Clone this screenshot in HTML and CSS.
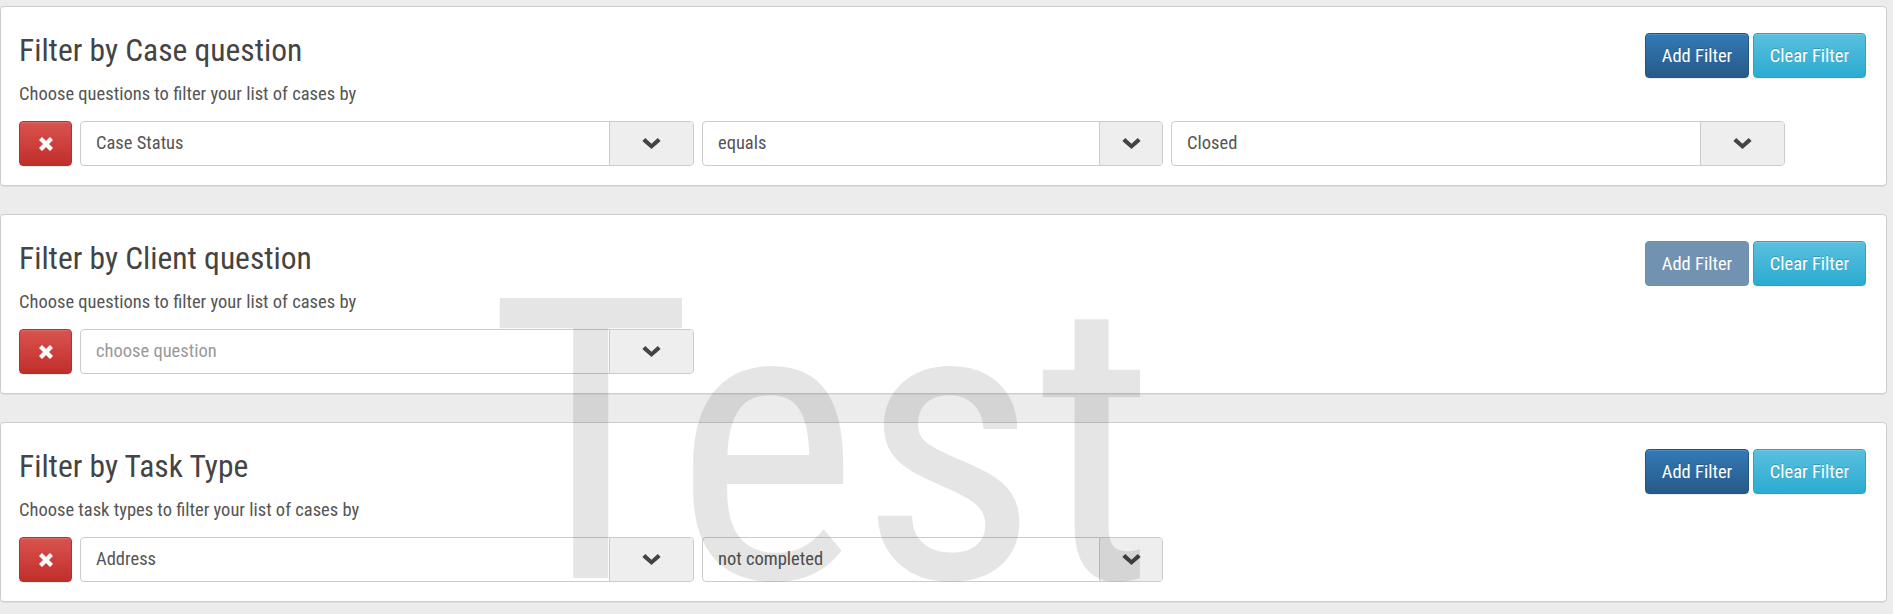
FILE: index.html
```html
<!DOCTYPE html>
<html lang="en">
<head>
<meta charset="utf-8">
<title>Filters</title>
<link rel="stylesheet" href="styles.css">
</head>
<body>
<div class="page">
  <section class="panel">
    <div class="panel-head">
      <div class="intro">
        <h3 class="title">Filter by Case question</h3>
        <p class="subtitle">Choose questions to filter your list of cases by</p>
      </div>
      <div class="actions">
        <button class="btn btn-primary">Add Filter</button>
        <button class="btn btn-info">Clear Filter</button>
      </div>
    </div>
    <div class="filter-row">
      <button class="btn-remove" aria-label="Remove"><svg class="icon-x" viewBox="0 0 14 14"><polygon points="3,0 7,4 11,0 14,3 10,7 14,11 11,14 7,10 3,14 0,11 4,7 0,3"/></svg></button>
      <div class="select wide"><span class="value">Case Status</span><span class="caret"><svg class="chev" viewBox="0 0 20 12"><polygon points="0,3.2 3.2,0 10,6.4 16.8,0 20,3.2 10,12"/></svg></span></div>
      <div class="select mid"><span class="value">equals</span><span class="caret"><svg class="chev" viewBox="0 0 20 12"><polygon points="0,3.2 3.2,0 10,6.4 16.8,0 20,3.2 10,12"/></svg></span></div>
      <div class="select wide"><span class="value">Closed</span><span class="caret"><svg class="chev" viewBox="0 0 20 12"><polygon points="0,3.2 3.2,0 10,6.4 16.8,0 20,3.2 10,12"/></svg></span></div>
    </div>
  </section>

  <section class="panel">
    <div class="panel-head">
      <div class="intro">
        <h3 class="title">Filter by Client question</h3>
        <p class="subtitle">Choose questions to filter your list of cases by</p>
      </div>
      <div class="actions">
        <button class="btn btn-primary is-disabled" disabled>Add Filter</button>
        <button class="btn btn-info">Clear Filter</button>
      </div>
    </div>
    <div class="filter-row">
      <button class="btn-remove" aria-label="Remove"><svg class="icon-x" viewBox="0 0 14 14"><polygon points="3,0 7,4 11,0 14,3 10,7 14,11 11,14 7,10 3,14 0,11 4,7 0,3"/></svg></button>
      <div class="select wide"><span class="value placeholder">choose question</span><span class="caret"><svg class="chev" viewBox="0 0 20 12"><polygon points="0,3.2 3.2,0 10,6.4 16.8,0 20,3.2 10,12"/></svg></span></div>
    </div>
  </section>

  <section class="panel">
    <div class="panel-head">
      <div class="intro">
        <h3 class="title">Filter by Task Type</h3>
        <p class="subtitle">Choose task types to filter your list of cases by</p>
      </div>
      <div class="actions">
        <button class="btn btn-primary">Add Filter</button>
        <button class="btn btn-info">Clear Filter</button>
      </div>
    </div>
    <div class="filter-row">
      <button class="btn-remove" aria-label="Remove"><svg class="icon-x" viewBox="0 0 14 14"><polygon points="3,0 7,4 11,0 14,3 10,7 14,11 11,14 7,10 3,14 0,11 4,7 0,3"/></svg></button>
      <div class="select wide"><span class="value">Address</span><span class="caret"><svg class="chev" viewBox="0 0 20 12"><polygon points="0,3.2 3.2,0 10,6.4 16.8,0 20,3.2 10,12"/></svg></span></div>
      <div class="select mid"><span class="value">not completed</span><span class="caret"><svg class="chev" viewBox="0 0 20 12"><polygon points="0,3.2 3.2,0 10,6.4 16.8,0 20,3.2 10,12"/></svg></span></div>
    </div>
  </section>

  <div class="watermark" aria-hidden="true">Test</div>
</div>
</body>
</html>
```
FILE: styles.css
```css
html, body {
  margin: 0;
  padding: 0;
  background: #ececec;
}
body {
  font-family: "Roboto Condensed", Roboto, "Liberation Sans", sans-serif;
  font-stretch: condensed;
  color: #555;
  font-size: 18.5px;
}
.page {
  position: relative;
  padding: 6px 6px 0 0;
  display: flex;
  flex-direction: column;
  gap: 28px;
  height: 614px;
  box-sizing: border-box;
  overflow: hidden;
}
.panel {
  background: #fff;
  border: 1px solid #cdcdcd;
  border-radius: 4px;
  box-shadow: 0 1px 1px rgba(0,0,0,.06);
  padding: 0 20px 19px 18px;
}
.panel-head {
  display: flex;
  justify-content: space-between;
  align-items: flex-start;
}
.title {
  margin: 27px 0 0;
  font-size: 31.5px;
  line-height: 33px;
  font-weight: 400;
  color: #444;
}
.subtitle {
  margin: 17px 0 0;
  font-size: 18.5px;
  line-height: 20px;
  color: #555;
}
.actions {
  display: flex;
  gap: 4px;
  margin-top: 26px;
}
.btn {
  font-family: inherit;
  font-stretch: condensed;
  font-size: 18.5px;
  color: #fff;
  height: 45px;
  padding: 0;
  border-radius: 4px;
  border: 1px solid transparent;
  text-shadow: 0 -1px 0 rgba(0,0,0,.2);
  box-shadow: inset 0 1px 0 rgba(255,255,255,.15), 0 1px 1px rgba(0,0,0,.075);
  cursor: pointer;
}
.btn-primary {
  background: linear-gradient(#337ab7, #265a88);
  border-color: #245580;
  width: 104px;
}
.btn-primary.is-disabled {
  background: #265a88;
  opacity: .65;
  box-shadow: none;
  cursor: default;
}
.btn-info {
  background: linear-gradient(#5bc0de, #2aabd2);
  border-color: #28a4c9;
  width: 113px;
}
.filter-row {
  display: flex;
  gap: 8px;
  margin-top: 17px;
}
.btn-remove {
  width: 53px;
  height: 45px;
  border-radius: 4px;
  border: 1px solid #b92c28;
  background: linear-gradient(#d9534f, #c12e2a);
  box-shadow: inset 0 1px 0 rgba(255,255,255,.15), 0 1px 1px rgba(0,0,0,.075);
  display: flex;
  align-items: center;
  justify-content: center;
  padding: 0;
}
.icon-x {
  width: 14px;
  height: 14px;
  fill: #fff;
}
.select {
  display: flex;
  height: 45px;
  box-sizing: border-box;
  border: 1px solid #ccc;
  border-radius: 4px;
  background: #fff;
  overflow: hidden;
}
.select.wide { width: 614px; }
.select.mid { width: 461px; }
.value {
  flex: 1;
  display: flex;
  align-items: center;
  padding: 0 0 2px 15px;
  color: #555;
}
.value.placeholder { color: #999; }
.caret {
  display: flex;
  align-items: center;
  justify-content: center;
  background: #eee;
  border-left: 1px solid #ccc;
  width: 13.5%;
}
.chev {
  width: 19px;
  height: 11px;
  fill: #444;
}
.watermark {
  position: absolute;
  left: 488px;
  top: 286px;
  font-size: 394px;
  line-height: 0.8;
  color: rgba(0,0,0,.1);
  pointer-events: none;
  white-space: nowrap;
}
```
